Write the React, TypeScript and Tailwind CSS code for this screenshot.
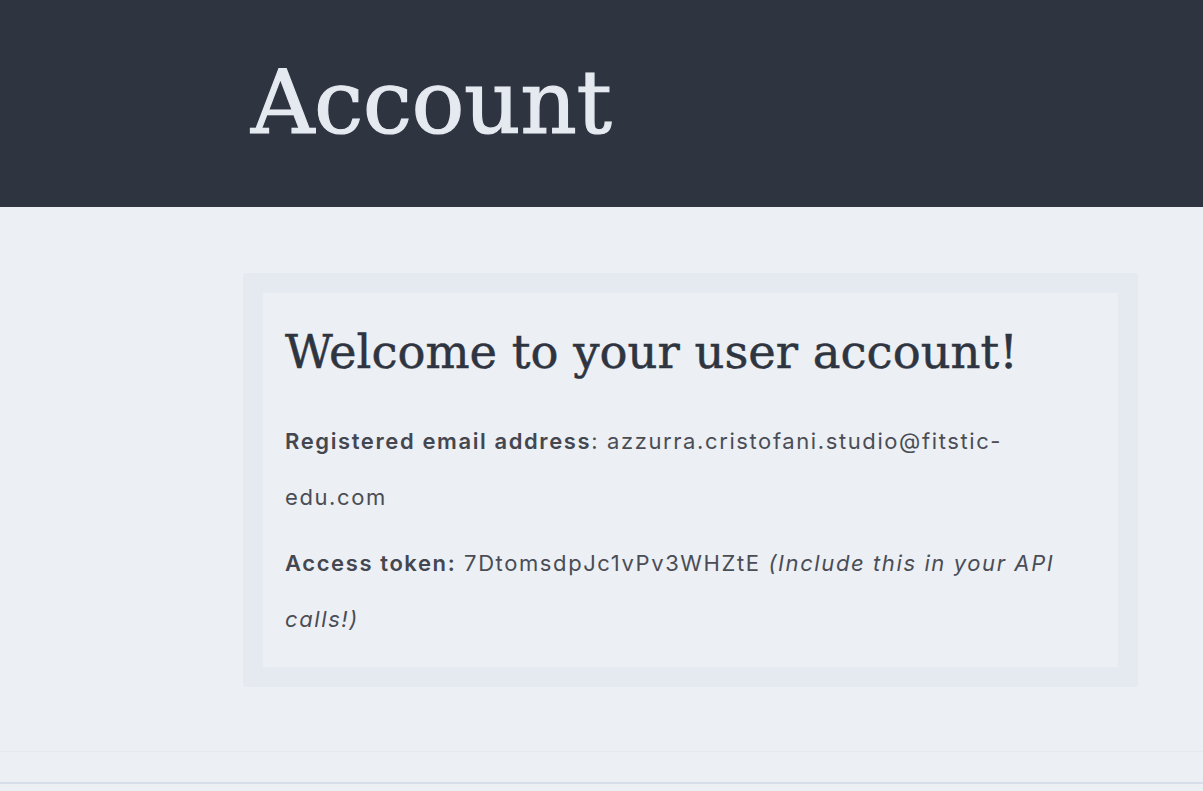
export default function App() {
  return (
    <div className="min-h-screen bg-[#eceff4] font-['Inter',sans-serif]">
      <header className="h-[207px] bg-[#2e3440]">
        <h1 className="pl-[251px] pt-[50px] font-['DejaVu_Serif',serif] text-[88px] leading-[1.2] tracking-[-0.5px] text-[#e5e9f0] [-webkit-text-stroke:1.2px_#e5e9f0]">
          Account
        </h1>
      </header>

      <main className="pl-[243px] pr-[65px] pt-[66px] pb-[64px]">
        <section className="rounded-[3px] bg-[#e5e9f0] p-5">
          <div className="bg-[#eceff4] px-[22px] pt-[32px] pb-[20px]">
            <h2 className="font-['DejaVu_Serif',serif] text-[46.5px] leading-[1.2] text-[#2e3440] [-webkit-text-stroke:0.5px_#2e3440]">
              Welcome to your user account!
            </h2>
            <p className="mt-[32px] text-[22px] leading-[56px] tracking-[1.6px] text-[#4a4d55]">
              <strong className="font-semibold text-[#44474f]">Registered email address</strong>: azzurra.cristofani.studio@fitstic-edu.com
            </p>
            <p className="mt-[10px] text-[22px] leading-[56px] tracking-[1.6px] text-[#4a4d55]">
              <strong className="font-semibold text-[#44474f]">Access token:</strong> 7DtomsdpJc1vPv3WHZtE{' '}
              <em>(Include this in your API calls!)</em>
            </p>
          </div>
        </section>
      </main>

      <footer className="border-t border-[#e5e9f0]">
        <div className="h-[32px] border-b-2 border-[#d8dee9]" />
        <div className="h-[10px]" />
      </footer>
    </div>
  );
}
